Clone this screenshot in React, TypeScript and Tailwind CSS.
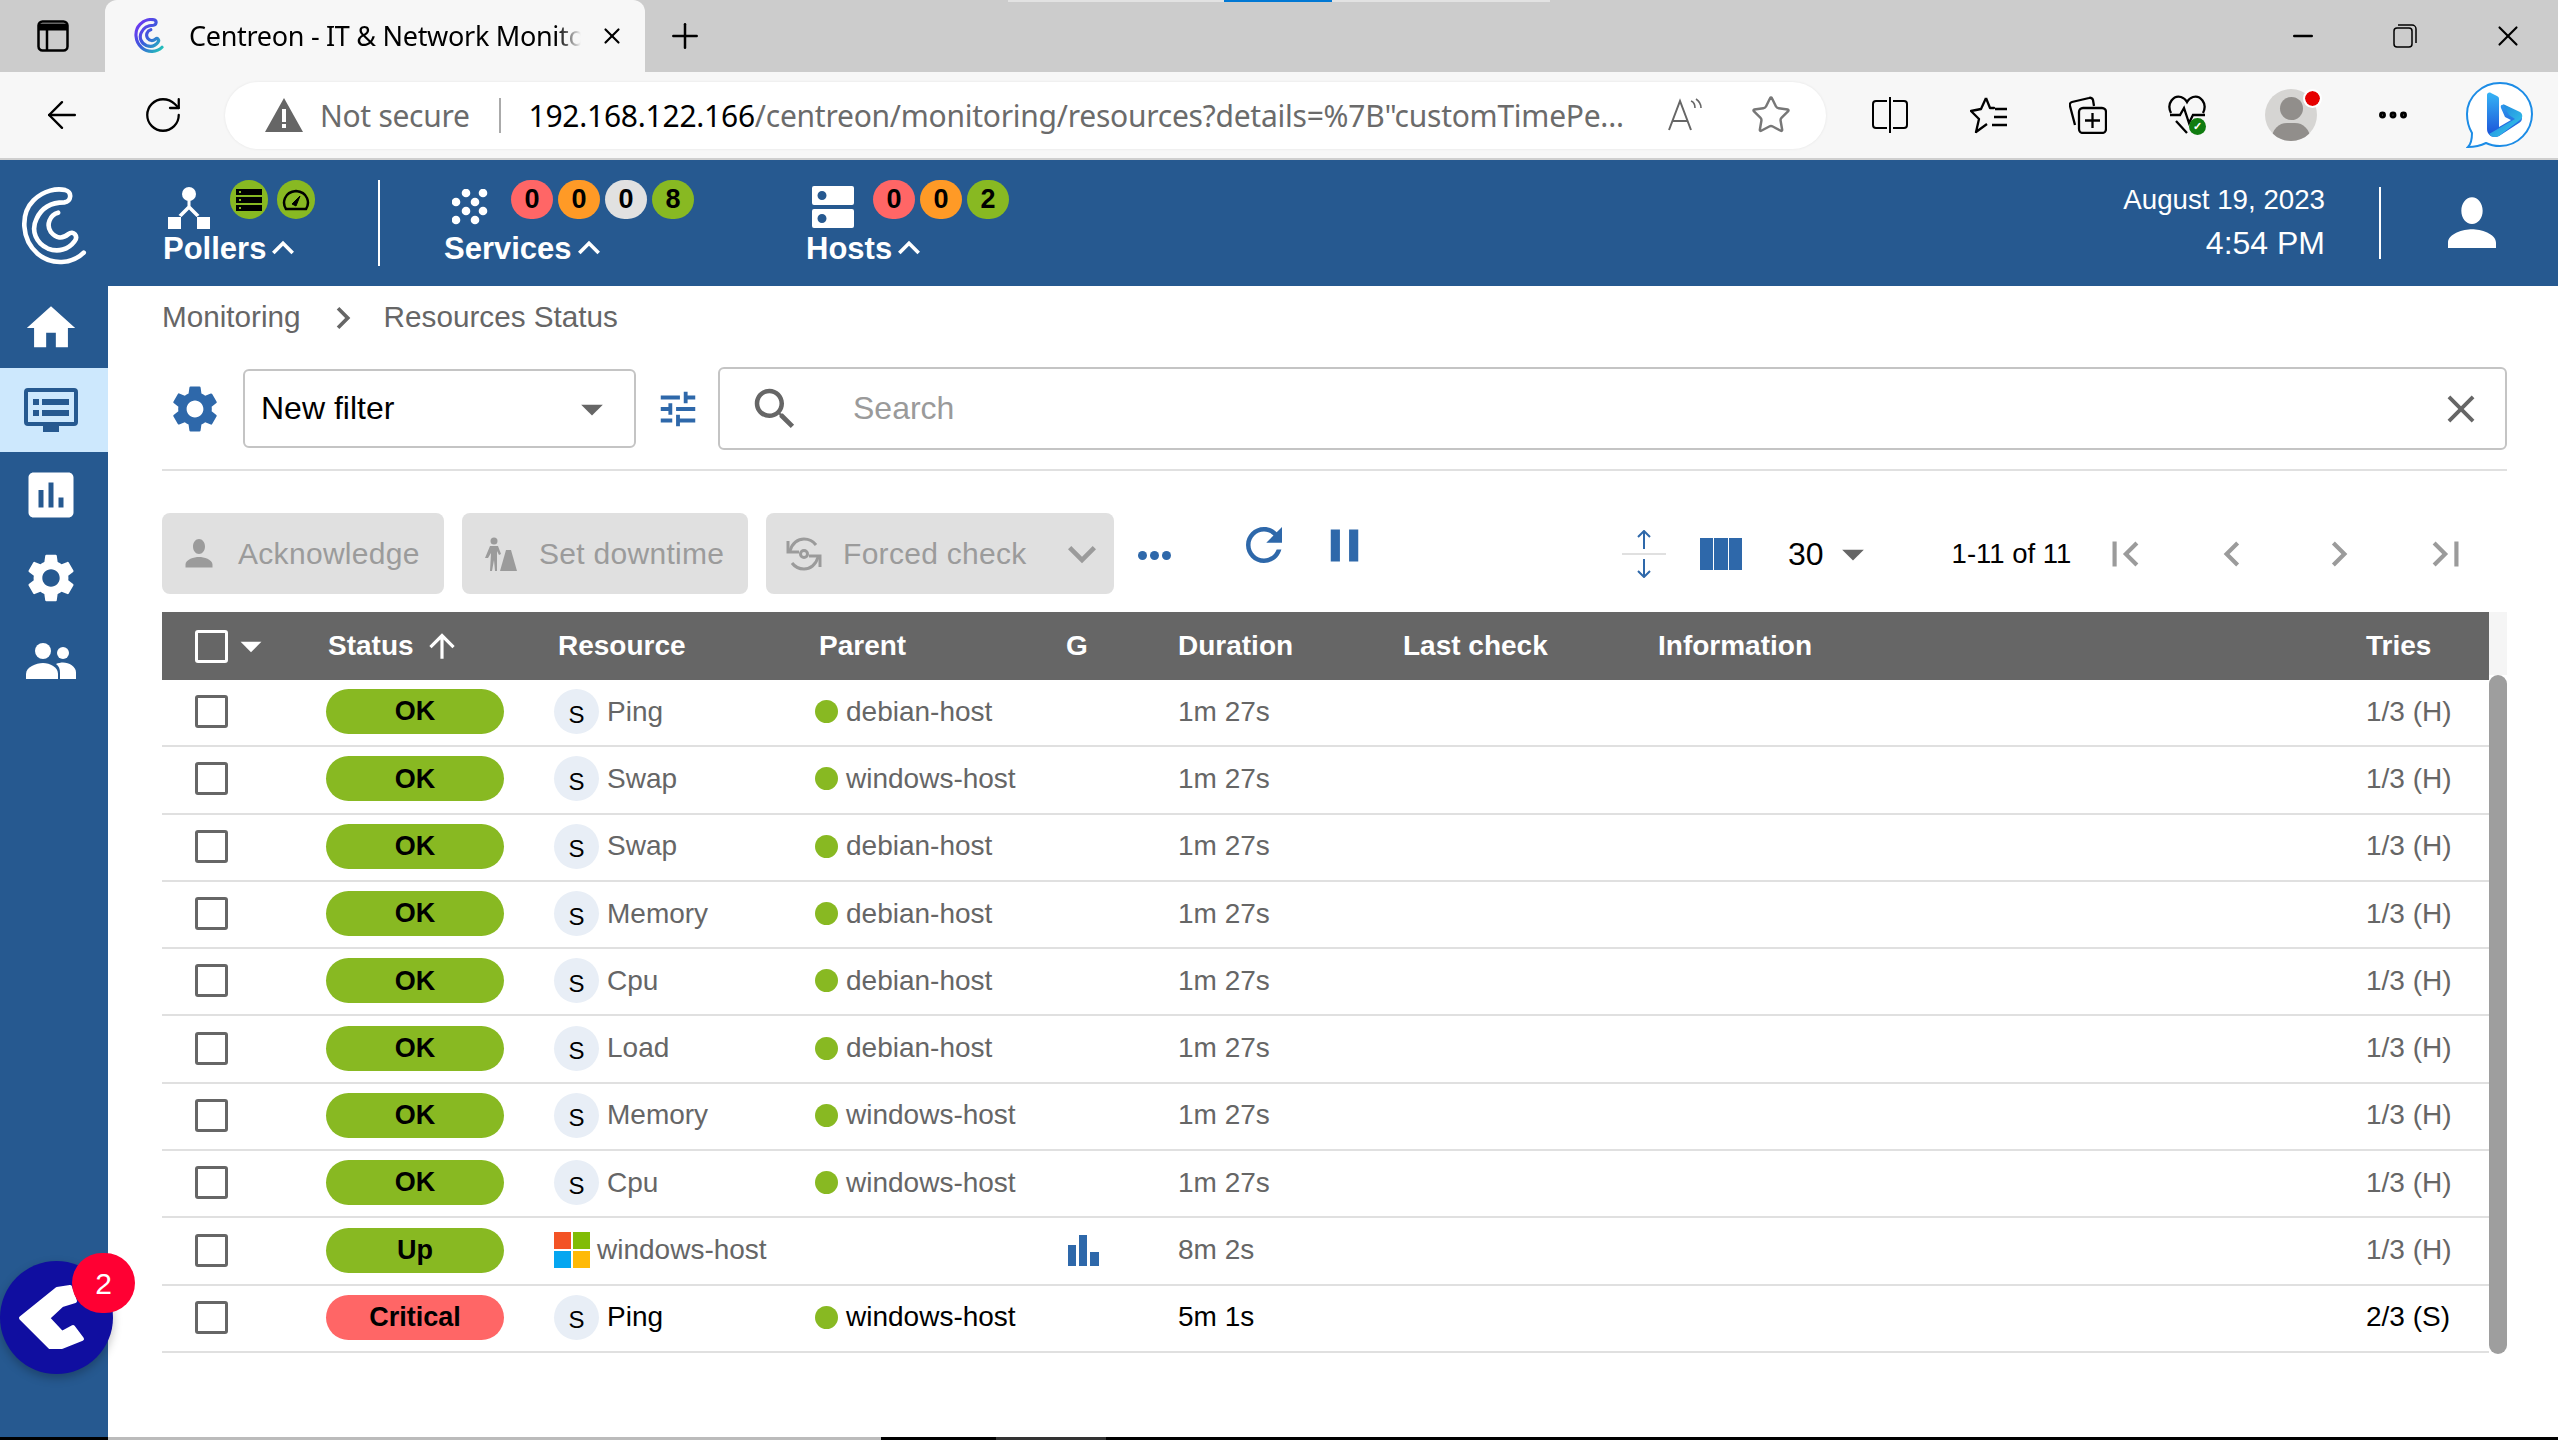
import React from "react";
import { ArrowLeft, RotateCw, Star, Plus, X, Minus, MoreHorizontal } from "lucide-react";

const P = {
  home: "M10 20v-6h4v6h5v-8h3L12 3 2 12h3v8z",
  gear: "M19.14,12.94c0.04-0.3,0.06-0.61,0.06-0.94c0-0.32-0.02-0.64-0.07-0.94l2.03-1.58c0.18-0.14,0.23-0.41,0.12-0.61 l-1.92-3.32c-0.12-0.22-0.37-0.29-0.59-0.22l-2.39,0.96c-0.5-0.38-1.03-0.7-1.62-0.94L14.4,2.81c-0.04-0.24-0.24-0.41-0.48-0.41 h-3.84c-0.24,0-0.43,0.17-0.47,0.41L9.25,5.35C8.66,5.59,8.12,5.92,7.63,6.29L5.24,5.33c-0.22-0.08-0.47,0-0.59,0.22L2.74,8.87 C2.62,9.08,2.66,9.34,2.86,9.48l2.03,1.58C4.84,11.36,4.8,11.69,4.8,12s0.02,0.64,0.07,0.94l-2.03,1.58 c-0.18,0.14-0.23,0.41-0.12,0.61l1.92,3.32c0.12,0.22,0.37,0.29,0.59,0.22l2.39-0.96c0.5,0.38,1.03,0.7,1.62,0.94l0.36,2.54 c0.05,0.24,0.24,0.41,0.48,0.41h3.84c0.24,0,0.44-0.17,0.47-0.41l0.36-2.54c0.59-0.24,1.13-0.56,1.62-0.94l2.39,0.96 c0.22,0.08,0.47,0,0.59-0.22l1.92-3.32c0.12-0.22,0.07-0.47-0.12-0.61L19.14,12.94z M12,15.6c-1.98,0-3.6-1.62-3.6-3.6 s1.62-3.6,3.6-3.6s3.6,1.62,3.6,3.6S13.98,15.6,12,15.6z",
  search: "M15.5 14h-.79l-.28-.27C15.41 12.59 16 11.11 16 9.5 16 5.91 13.09 3 9.5 3S3 5.91 3 9.5 5.91 16 9.5 16c1.61 0 3.09-.59 4.23-1.57l.27.28v.79l5 4.99L20.49 19l-4.99-5zm-6 0C7.01 14 5 11.99 5 9.5S7.01 5 9.5 5 14 7.01 14 9.5 11.99 14 9.5 14z",
  tune: "M3 17v2h6v-2H3zM3 5v2h10V5H3zm10 16v-2h8v-2h-8v-2h-2v6h2zM7 9v2H3v2h4v2h2V9H7zm14 4v-2H11v2h10zm-6-4h2V7h4V5h-4V3h-2v6z",
  refresh: "M17.65 6.35C16.2 4.9 14.21 4 12 4c-4.42 0-7.99 3.58-7.99 8s3.57 8 7.99 8c3.73 0 6.84-2.55 7.73-6h-2.08c-.82 2.33-3.04 4-5.65 4-3.31 0-6-2.69-6-6s2.69-6 6-6c1.66 0 3.14.69 4.22 1.78L13 11h7V4l-2.35 2.35z",
  pause: "M6 19h4V5H6v14zm8-14v14h4V5h-4z",
  poll: "M19 3H5c-1.1 0-2 .9-2 2v14c0 1.1.9 2 2 2h14c1.1 0 2-.9 2-2V5c0-1.1-.9-2-2-2zM9 17H7v-7h2v7zm4 0h-2V7h2v10zm4 0h-2v-4h2v4z",
  up: "M4 12l1.41 1.41L11 7.83V20h2V7.83l5.58 5.59L20 12l-8-8-8 8z",
  first: "M18.41 16.59L13.82 12l4.59-4.59L17 6l-6 6 6 6zM6 6h2v12H6z",
  last: "M5.59 7.41L10.18 12l-4.59 4.59L7 18l6-6-6-6zM16 6h2v12h-2z",
  prev: "M15.41 7.41L14 6l-6 6 6 6 1.41-1.41L10.83 12z",
  next: "M10 6L8.59 7.41 13.17 12l-4.58 4.59L10 18l6-6z",
  drop: "M7 10l5 5 5-5z",
  close: "M19 6.41L17.59 5 12 10.59 6.41 5 5 6.41 10.59 12 5 17.59 6.41 19 12 13.41 17.59 19 19 17.59 13.41 12z",
  less: "M12 8l-6 6 1.41 1.41L12 10.83l4.59 4.58L18 14z",
  more: "M16.59 8.59L12 13.17 7.41 8.59 6 10l6 6 6-6z",
  person: "M12 12c2.21 0 4-2.24 4-5s-1.79-5-4-5-4 2.24-4 5 1.79 5 4 5zm0 2c-3.2 0-9 1.6-9 5v2h18v-2c0-3.4-5.8-5-9-5z",
};

const Mi = ({ d, className }: { d: string; className: string }) => (
  <svg viewBox="0 0 24 24" className={className} fill="currentColor">
    <path d={d} />
  </svg>
);

const spiral =
  "M61 63 C50 74 30 76 16 64 C0 50 -1 25 12 12 C22 2 35 0 43 2 C50 4 49 13 42 14 C30 14 20 19 15 30 C9 42 15 54 26 59 C36 63 46 60 52 52 C56 47 51 41 46 45 C40 50 34 49 29 43 C24 36 28 26 36 24";

const Spiral = ({ className, stroke }: { className: string; stroke: string }) => (
  <svg viewBox="-2 -2 68 80" className={className} fill="none">
    <path d={spiral} stroke={stroke} strokeWidth="4.5" strokeLinecap="round" strokeLinejoin="round" />
  </svg>
);

const Favicon = () => (
  <svg viewBox="-2 -2 68 80" className="w-[36px] h-[36px]" fill="none">
    <defs>
      <linearGradient id="fav" x1="0" y1="0" x2="1" y2="1">
        <stop offset="0" stopColor="#7b2ff7" />
        <stop offset="0.5" stopColor="#3b5bdb" />
        <stop offset="1" stopColor="#20c9b7" />
      </linearGradient>
    </defs>
    <path d={spiral} stroke="url(#fav)" strokeWidth="7" strokeLinecap="round" />
  </svg>
);

const PollerIcon = () => (
  <svg viewBox="0 0 42 42" className="w-[42px] h-[42px]" fill="white">
    <circle cx="21" cy="7" r="7" />
    <path d="M19.5 12h3v7l9 9-3 2-7.5-7.5L13.5 30l-3-2 9-9z" />
    <rect x="0" y="30" width="13" height="12" />
    <rect x="29" y="30" width="13" height="12" />
  </svg>
);

const ServicesIcon = () => (
  <svg viewBox="0 0 36 36" className="w-[36px] h-[36px]" fill="white">
    {[[14, 4], [31, 4], [4, 13], [23, 13], [14, 22], [31, 22], [4, 31], [23, 31]].map(([x, y]) => (
      <circle key={`${x}-${y}`} cx={x} cy={y} r="4.3" />
    ))}
  </svg>
);

const HostsIcon = () => (
  <svg viewBox="0 0 42 42" className="w-[42px] h-[42px]">
    <path fillRule="evenodd" fill="white" d="M2 0h38a2 2 0 0 1 2 2v15a2 2 0 0 1-2 2H2a2 2 0 0 1-2-2V2a2 2 0 0 1 2-2zm8 5a4.5 4.5 0 1 0 0 9 4.5 4.5 0 0 0 0-9z" />
    <path fillRule="evenodd" fill="white" d="M2 23h38a2 2 0 0 1 2 2v15a2 2 0 0 1-2 2H2a2 2 0 0 1-2-2V25a2 2 0 0 1 2-2zm8 5a4.5 4.5 0 1 0 0 9 4.5 4.5 0 0 0 0-9z" />
  </svg>
);

const Badge = ({ color, children }: { color: string; children: React.ReactNode }) => (
  <div className={`w-[42px] h-[39px] rounded-full flex items-center justify-center text-[27px] font-bold text-black ${color}`}>
    {children}
  </div>
);

const NavLabel = ({ label }: { label: string }) => (
  <div className="flex items-center text-white font-bold text-[31px] leading-[36px]">
    {label}
    <Mi d={P.less} className="w-[44px] h-[44px] -ml-[5px] -my-[4px] -mt-[6px] shrink-0" />
  </div>
);

const Sidebar = () => (
  <div className="w-[108px] shrink-0 bg-[#265990] flex flex-col items-center text-white pt-[13px]">
    <Mi d={P.home} className="w-[58px] h-[58px] shrink-0 -translate-x-[3px]" />
    <div className="mt-[11px] w-full h-[84px] bg-[#cde8fd] flex items-center justify-center pr-[6px]">
      <svg viewBox="0 0 54 44" className="w-[54px] h-[44px]">
        <path fill="#265990" d="M4 0h46a4 4 0 0 1 4 4v30a4 4 0 0 1-4 4H35v6H19v-6H4a4 4 0 0 1-4-4V4a4 4 0 0 1 4-4z" />
        <rect x="4" y="4" width="46" height="30" fill="#cde8fd" />
        <rect x="9" y="11" width="6" height="6" fill="#265990" />
        <rect x="18" y="11" width="27" height="6" fill="#265990" />
        <rect x="9" y="22" width="6" height="6" fill="#265990" />
        <rect x="18" y="22" width="27" height="6" fill="#265990" />
      </svg>
    </div>
    <Mi d={P.poll} className="mt-[13px] w-[60px] h-[60px] shrink-0 -translate-x-[3px]" />
    <Mi d={P.gear} className="mt-[24px] w-[58px] h-[58px] shrink-0 -translate-x-[3px]" />
    <svg viewBox="0 0 50 36" className="mt-[36px] w-[50px] h-[36px] -translate-x-[3px]" fill="white">
      <ellipse cx="17" cy="8" rx="8" ry="8" />
      <circle cx="37" cy="10" r="6" />
      <path d="M0 36v-5c0-7 10-11 17-11s15 4 15 11v5z" />
      <path d="M34 36v-6c0-4-1-7-4-9 2-1 5-1.500 7-1.500 6 0 13 4 13 10v6.500z" />
    </svg>
  </div>
);

const TopBar = () => (
  <div className="h-[72px] bg-[#cccccc] flex items-center font-['Noto_Sans',sans-serif] text-black">
    <div className="w-[105px] flex justify-center">
      <svg viewBox="0 0 32 32" className="w-[32px] h-[32px]" fill="none" stroke="black" strokeWidth="2.500">
        <rect x="1.500" y="1.500" width="29" height="29" rx="4" />
        <path d="M1.500 7h29" strokeWidth="7" />
        <path d="M10 7v23" />
      </svg>
    </div>
    <div className="h-[72px] w-[540px] bg-[#f7f7f7] rounded-t-[12px] flex items-center pl-[26px] overflow-hidden">
      <Favicon />
      <div className="ml-[22px] w-[392px] text-[27px] whitespace-nowrap overflow-hidden tracking-[-0.3px] [mask-image:linear-gradient(to_right,black_94%,transparent)]">
        Centreon - IT &amp; Network Monitor
      </div>
      <X className="ml-[18px] w-[26px] h-[26px]" strokeWidth={2} />
    </div>
    <Plus className="ml-[20px] w-[40px] h-[40px]" strokeWidth={1.5} />
    <div className="flex-1" />
    <Minus className="w-[30px] h-[30px] mr-[75px]" strokeWidth={2} />
    <svg viewBox="0 0 24 24" className="w-[24px] h-[24px] mr-[74px]" fill="none" stroke="black" strokeWidth="1.500">
      <rect x="1" y="4" width="18" height="19" rx="3" />
      <path d="M5 1h14a4 4 0 0 1 4 4v14" />
    </svg>
    <X className="w-[34px] h-[34px] mr-[33px]" strokeWidth={1.5} />
  </div>
);

const AddressBar = () => (
  <div className="h-[88px] bg-[#f7f7f7] border-b-2 border-[#cfcfcf] flex items-center font-['Noto_Sans',sans-serif]">
    <ArrowLeft className="ml-[40px] w-[44px] h-[44px] text-black" strokeWidth={1.3} />
    <RotateCw className="ml-[58px] w-[42px] h-[42px] text-black" strokeWidth={1.3} />
    <div className="ml-[41px] w-[1601px] h-[67px] bg-white rounded-full flex items-center shadow-[0_0_3px_rgba(0,0,0,0.08)]">
      <svg viewBox="0 0 38 34" className="ml-[40px] w-[38px] h-[34px]" fill="#666">
        <path fillRule="evenodd" d="M19 0l19 34H0zM17 11h4v13h-4zM17 26h4v4h-4z" />
      </svg>
      <span className="ml-[17px] text-[30px] tracking-[-0.3px] text-[#6b6b6b]">Not secure</span>
      <div className="ml-[29px] w-[2px] h-[35px] bg-[#aaa]" />
      <span className="ml-[28px] text-[30px] tracking-[-0.25px] text-[#6b6b6b] whitespace-nowrap">
        <span className="text-black">192.168.122.166</span>/centreon/monitoring/resources?details=%7B"customTimePe...
      </span>
      <div className="flex-1" />
      <svg viewBox="0 0 36 34" className="w-[36px] h-[34px] mr-[47px]" fill="none" stroke="#666" strokeWidth="2">
        <path d="M2 32L13 3l11 29M6 23h14" />
        <path d="M24 3c3 1 4 4 4 7M29 1c3 2 5 6 5 9" strokeWidth="1.600" />
      </svg>
      <Star className="w-[42px] h-[42px] mr-[34px] text-[#777]" strokeWidth={1.4} />
    </div>
    <svg viewBox="0 0 36 36" className="ml-[46px] w-[36px] h-[36px]" fill="none" stroke="black" strokeWidth="2">
      <path d="M15 4H4a3 3 0 0 0-3 3v21a3 3 0 0 0 3 3h11M21 4h11a3 3 0 0 1 3 3v21a3 3 0 0 1-3 3H21M18 0v36" />
    </svg>
    <svg viewBox="0 0 38 38" className="ml-[62px] w-[38px] h-[38px]" fill="none" stroke="black" strokeWidth="2.300" strokeLinejoin="round">
      <path d="M16 2l4 10h4l-1 0M16 2l-5 11-10 2 8 8-3 13 11-8" />
      <path d="M25 13h12M24 21h13M22 29h15" />
    </svg>
    <svg viewBox="0 0 38 38" className="ml-[61px] w-[38px] h-[38px]" fill="none" stroke="black" strokeWidth="2.300">
      <path d="M6 29L1 10a3 3 0 0 1 2-4l17-4a3 3 0 0 1 4 2l1 6" />
      <rect x="10" y="12" width="27" height="25" rx="4" />
      <path d="M23.500 17v15M16 24.500h15" />
    </svg>
    <div className="relative ml-[61px] w-[38px] h-[40px]">
      <svg viewBox="0 0 38 40" className="w-[38px] h-[40px]" fill="none" stroke="black" strokeWidth="2.300">
        <path d="M3 18C-2 8 6 0 13 2c3 1 5 3 6 5 1-2 3-4 6-5 7-2 15 6 10 16M2 20h10l4-7 5 15 4-8h12M8 26l11 12" />
      </svg>
      <div className="absolute right-0 bottom-0 w-[17px] h-[17px] rounded-full bg-[#107c10] flex items-center justify-center text-white text-[11px] font-bold">✓</div>
    </div>
    <div className="relative ml-[59px] w-[52px] h-[52px] rounded-full bg-[#d6d5d3] overflow-hidden">
      <div className="mx-auto mt-[8px] w-[23px] h-[23px] rounded-full bg-[#918e8b]" />
      <div className="mx-auto mt-[3px] w-[38px] h-[30px] rounded-full bg-[#918e8b]" />
    </div>
    <div className="relative -ml-[12px] -mt-[34px] w-[15px] h-[15px] rounded-full bg-[#e60000] outline-2 outline-white" />
    <MoreHorizontal className="ml-[55px] w-[36px] h-[36px] text-black" strokeWidth={2.600} />
    <svg viewBox="0 0 68 68" className="ml-[55px] w-[68px] h-[68px]" fill="none">
      <defs>
        <linearGradient id="bb" x1="0" y1="0" x2="0" y2="1">
          <stop offset="0" stopColor="#36b4f5" />
          <stop offset="1" stopColor="#1b4fd8" />
        </linearGradient>
        <linearGradient id="bc" x1="0" y1="0" x2="1" y2="1">
          <stop offset="0" stopColor="#1b78e0" />
          <stop offset="1" stopColor="#38d0e8" />
        </linearGradient>
      </defs>
      <path d="M34 2c18 0 32 14 32 31S52 65 34 65c-5 0-10-1-14-3-4 2-10 4-18 4 3-3 4-8 4-14C3 47 1 40 1 33 1 16 16 2 34 2z" fill="white" stroke="#1c8ce6" strokeWidth="2" />
      <path d="M21 14c0-2 2-3 4-2l6 3c1 .5 2 1 2 3v28l12-7-6-3-4-9c-1-3 1-4 3-3l14 7c3 1 4 3 4 6 0 2-1 4-3 5L33 55c-6 3-12-1-12-7z" fill="url(#bb)" />
      <path d="M37 23l17 8c3 2 3 6 0 8L33 55c-4 2-8 1-10-2l26-15-6-4z" fill="url(#bc)" />
    </svg>
  </div>
);

const Header = () => (
  <div className="h-[126px] bg-[#265990] flex font-['Liberation_Sans',sans-serif] text-white">
    <div className="w-[108px] flex items-center justify-center pt-[8px]">
      <Spiral className="w-[70px] h-[82px]" stroke="white" />
    </div>
    <div className="ml-[55px] w-[215px] pt-[20px]">
      <div className="h-[51px] flex">
        <div className="ml-[5px] mt-[7px]"><PollerIcon /></div>
        <div className="ml-[20px] w-[38px] h-[39px] rounded-full bg-[#88b922] flex items-center justify-center">
          <svg viewBox="0 0 26 22" className="w-[26px] h-[22px]" fill="black">
            <path fillRule="evenodd" d="M0 0h26v6H0zM3 2v2h2V2zM0 8h26v6H0zM3 10v2h2v-2zM0 16h26v6H0zM3 18v2h2v-2z" />
          </svg>
        </div>
        <div className="ml-[9px] w-[38px] h-[39px] rounded-full bg-[#88b922] flex items-center justify-center">
          <svg viewBox="0 0 28 22" className="w-[28px] h-[22px]" fill="none" stroke="black" strokeWidth="2.500">
            <path d="M4 20C0 14 2 3 14 2c12 1 14 12 10 18z" />
            <path d="M10 15l8-8-4 10z" fill="black" strokeWidth="1" />
          </svg>
        </div>
      </div>
      <NavLabel label="Pollers" />
    </div>
    <div className="mt-[20px] w-[2px] h-[86px] bg-white" />
    <div className="ml-[64px] w-[362px] pt-[20px]">
      <div className="h-[51px] flex">
        <div className="ml-[8px] mt-[9px]"><ServicesIcon /></div>
        <div className="ml-[23px] flex gap-[5px]">
          <Badge color="bg-[#ff6666]">0</Badge>
          <Badge color="bg-[#ff9a26]">0</Badge>
          <Badge color="bg-[#e1e1e1]">0</Badge>
          <Badge color="bg-[#88b922]">8</Badge>
        </div>
      </div>
      <NavLabel label="Services" />
    </div>
    <div className="pt-[20px]">
      <div className="h-[51px] flex">
        <div className="ml-[6px] mt-[6px]"><HostsIcon /></div>
        <div className="ml-[19px] flex gap-[5px]">
          <Badge color="bg-[#ff6666]">0</Badge>
          <Badge color="bg-[#ff9a26]">0</Badge>
          <Badge color="bg-[#88b922]">2</Badge>
        </div>
      </div>
      <NavLabel label="Hosts" />
    </div>
    <div className="flex-1" />
    <div className="text-right pt-[24px]">
      <div className="text-[27.7px] leading-[32px]">August 19, 2023</div>
      <div className="text-[32px] leading-[38px] mt-[8px]">4:54 PM</div>
    </div>
    <div className="ml-[54px] mt-[27px] w-[2px] h-[72px] bg-white" />
    <div className="ml-[58px] mt-[32px] w-[66px] mr-[53px] flex justify-center">
      <Mi d={P.person} className="w-[64px] h-[64px] shrink-0" />
    </div>
  </div>
);

const FilterRow = () => (
  <div className="h-[83px] flex items-center">
    <Mi d={P.gear} className="ml-[5px] w-[56px] h-[56px] text-[#2e68aa] shrink-0" />
    <div className="ml-[20px] w-[393px] h-[79px] border-2 border-[#c4c4c4] rounded-[6px] flex items-center pl-[16px] pr-[16px] text-[32px] text-black">
      <span className="pb-[2px]">New filter</span>
      <div className="flex-1" />
      <Mi d={P.drop} className="w-[52px] h-[52px] text-[#666]" />
    </div>
    <Mi d={P.tune} className="ml-[19px] w-[46px] h-[46px] text-[#2e68aa] shrink-0" />
    <div className="ml-[17px] flex-1 h-[83px] border-2 border-[#c4c4c4] rounded-[6px] flex items-center pl-[28px] pr-[21px]">
      <Mi d={P.search} className="w-[54px] h-[54px] text-[#666]" />
      <span className="ml-[51px] text-[32px] text-[#9a9a9a] pb-[2px]">Search</span>
      <div className="flex-1" />
      <Mi d={P.close} className="w-[46px] h-[46px] text-[#666]" />
    </div>
  </div>
);

const ActionButton = ({ width, icon, label, children }: { width: string; icon: React.ReactNode; label: string; children?: React.ReactNode }) => (
  <div className={`h-[81px] rounded-[8px] bg-[#e0e0e0] flex items-center text-[#9b9b9b] text-[30px] tracking-[0.3px] ${width}`}>
    {icon}
    {label}
    {children}
  </div>
);

const ActionRow = () => (
  <div className="h-[81px] mt-[42px] flex items-center">
    <div className="flex gap-[18px]">
      <ActionButton
        width="w-[282px]"
        label="Acknowledge"
        icon={<Mi d={P.person} className="ml-[19px] mr-[21px] w-[36px] h-[36px]" />}
      />
      <ActionButton
        width="w-[286px]"
        label="Set downtime"
        icon={
          <svg viewBox="0 0 34 34" className="ml-[21px] mr-[22px] w-[34px] h-[34px]" fill="#9b9b9b">
            <circle cx="11" cy="4" r="3.500" />
            <path d="M7 9h8l3 8-2 1-2-4v20h-2l-1-11-2 11H7l1-18-3 5H2z" />
            <path d="M23 13h5l6 21H17z" />
          </svg>
        }
      />
      <ActionButton
        width="w-[348px]"
        label="Forced check"
        icon={
          <svg viewBox="0 0 36 36" className="ml-[20px] mr-[21px] w-[36px] h-[36px]" fill="none" stroke="#9b9b9b" strokeWidth="3">
            <path d="M4 15C6 7 12 3 18 3c5 0 9 2 12 6M32 21c-2 8-8 12-14 12-5 0-9-2-12-6" />
            <path d="M2 5v11h11M34 31V20H23" strokeWidth="3" />
            <circle cx="18" cy="18" r="3.500" />
          </svg>
        }
      >
        <Mi d={P.more} className="ml-[27px] w-[56px] h-[56px] shrink-0" />
      </ActionButton>
    </div>
    <div className="ml-[24px] flex gap-[3px] mt-[4px]">
      <div className="w-[9px] h-[9px] rounded-full bg-[#2e68aa]" />
      <div className="w-[9px] h-[9px] rounded-full bg-[#2e68aa]" />
      <div className="w-[9px] h-[9px] rounded-full bg-[#2e68aa]" />
    </div>
    <Mi d={P.refresh} className="ml-[66px] -mt-[17px] w-[54px] h-[54px] text-[#2e68aa]" />
    <Mi d={P.pause} className="ml-[26px] -mt-[17px] w-[55px] h-[55px] text-[#2e68aa]" />
    <div className="ml-[249px] w-[46px] flex flex-col items-center text-[#2e68aa]">
      <svg viewBox="0 0 46 48" className="w-[46px] h-[48px]" fill="none" stroke="currentColor" strokeWidth="2">
        <path d="M23 1v18M17 7l6-6 6 6M23 47V29M17 41l6 6 6-6" />
        <path d="M1 24h44" stroke="#e0e0e0" strokeWidth="2" />
      </svg>
    </div>
    <div className="ml-[33px] w-[42px] h-[32px] flex gap-[1px]">
      <div className="flex-1 bg-[#2e68aa]" />
      <div className="flex-1 bg-[#2e68aa]" />
      <div className="flex-1 bg-[#2e68aa]" />
    </div>
    <span className="ml-[46px] text-[32px] text-black">30</span>
    <Mi d={P.drop} className="ml-[3px] w-[52px] h-[52px] text-[#666]" />
    <span className="ml-[73px] text-[27.5px] text-black whitespace-nowrap">1-11 of 11</span>
    <Mi d={P.first} className="ml-[29px] w-[50px] h-[50px] text-[#9b9b9b]" />
    <Mi d={P.prev} className="ml-[57px] w-[50px] h-[50px] text-[#9b9b9b]" />
    <Mi d={P.next} className="ml-[57px] w-[50px] h-[50px] text-[#9b9b9b]" />
    <Mi d={P.last} className="ml-[57px] w-[50px] h-[50px] text-[#9b9b9b]" />
  </div>
);

const cols = "grid grid-cols-[160px_236px_261px_240px_119px_225px_255px_708px_1fr]";

type Row = { status: string; kind: "s" | "h"; name: string; parent?: string; duration: string; tries: string };

const rows: Row[] = [
  { status: "OK", kind: "s", name: "Ping", parent: "debian-host", duration: "1m 27s", tries: "1/3 (H)" },
  { status: "OK", kind: "s", name: "Swap", parent: "windows-host", duration: "1m 27s", tries: "1/3 (H)" },
  { status: "OK", kind: "s", name: "Swap", parent: "debian-host", duration: "1m 27s", tries: "1/3 (H)" },
  { status: "OK", kind: "s", name: "Memory", parent: "debian-host", duration: "1m 27s", tries: "1/3 (H)" },
  { status: "OK", kind: "s", name: "Cpu", parent: "debian-host", duration: "1m 27s", tries: "1/3 (H)" },
  { status: "OK", kind: "s", name: "Load", parent: "debian-host", duration: "1m 27s", tries: "1/3 (H)" },
  { status: "OK", kind: "s", name: "Memory", parent: "windows-host", duration: "1m 27s", tries: "1/3 (H)" },
  { status: "OK", kind: "s", name: "Cpu", parent: "windows-host", duration: "1m 27s", tries: "1/3 (H)" },
  { status: "Up", kind: "h", name: "windows-host", duration: "8m 2s", tries: "1/3 (H)" },
  { status: "Critical", kind: "s", name: "Ping", parent: "windows-host", duration: "5m 1s", tries: "2/3 (S)" },
];

const TableRow = ({ row }: { row: Row }) => {
  const critical = row.status === "Critical";
  const text = critical ? "text-black" : "text-[#666666]";
  return (
    <div className={`${cols} h-[67.3px] border-b-2 border-[#e0e0e0] pb-[2px] items-center text-[28px] ${text}`}>
      <div className="pl-[33px]">
        <div className="w-[33px] h-[33px] border-[3px] border-[#666] rounded-[3px]" />
      </div>
      <div className={`w-[178px] ml-[4px] h-[45px] rounded-full flex items-center justify-center font-bold text-[27px] text-black ${critical ? "bg-[#ff6666]" : "bg-[#88b922]"}`}>
        {row.status}
      </div>
      <div className="flex items-center">
        {row.kind === "s" ? (
          <>
            <div className="w-[45px] h-[45px] -ml-[4px] rounded-full bg-[#e8eef6] flex items-center justify-center text-black text-[24px] pt-[6px]">S</div>
            <span className="ml-[8px]">{row.name}</span>
          </>
        ) : (
          <>
            <div className="-ml-[4px] grid grid-cols-2 gap-[2px] w-[36px] h-[36px] shrink-0">
              <div className="bg-[#f35325]" />
              <div className="bg-[#81bc06]" />
              <div className="bg-[#05a6f0]" />
              <div className="bg-[#ffba08]" />
            </div>
            <span className="ml-[7px]">{row.name}</span>
          </>
        )}
      </div>
      <div className="flex items-center -ml-[4px]">
        {row.parent && (
          <>
            <div className="w-[23px] h-[23px] rounded-full bg-[#88b922]" />
            <span className="ml-[8px]">{row.parent}</span>
          </>
        )}
      </div>
      <div>
        {row.kind === "h" && (
          <div className="ml-[9px] w-[31px] h-[31px] flex items-end gap-[3px]">
            <div className="w-[8px] h-[21px] bg-[#2e68aa]" />
            <div className="w-[8px] h-[31px] bg-[#2e68aa]" />
            <div className="w-[9px] h-[14px] bg-[#2e68aa]" />
          </div>
        )}
      </div>
      <div>{row.duration}</div>
      <div />
      <div />
      <div>{row.tries}</div>
    </div>
  );
};

const Table = () => (
  <div className="mt-[18px] flex">
    <div className="w-[2327px]">
      <div className={`${cols} h-[68px] bg-[#666666] items-center text-white font-bold text-[28px]`}>
        <div className="pl-[33px] flex items-center">
          <div className="w-[33px] h-[33px] border-[3px] border-white rounded-[3px]" />
          <Mi d={P.drop} className="-ml-[2px] w-[50px] h-[50px] shrink-0" />
        </div>
        <div className="pl-[6px] flex items-center">
          Status
          <Mi d={P.up} className="ml-[9px] w-[38px] h-[38px]" />
        </div>
        <div>Resource</div>
        <div>Parent</div>
        <div className="pl-[7px]">G</div>
        <div>Duration</div>
        <div>Last check</div>
        <div>Information</div>
        <div>Tries</div>
      </div>
      {rows.map((row, i) => (
        <TableRow key={i} row={row} />
      ))}
    </div>
    <div className="w-[18px]">
      <div className="h-[63px] bg-[#f5f5f5]" />
      <div className="h-[679px] rounded-full bg-[#9e9e9e]" />
    </div>
  </div>
);

export default function App() {
  return (
    <div className="relative w-[2558px] h-[1440px] overflow-hidden bg-white">
      <div className="absolute left-[1008px] top-0 w-[542px] h-[2px] bg-[#e2e2e2]" />
      <div className="absolute left-[1224px] top-0 w-[108px] h-[2px] bg-[#0078d4]" />
      <TopBar />
      <AddressBar />
      <Header />
      <div className="flex h-[1154px] font-['Liberation_Sans',sans-serif]">
        <Sidebar />
        <div className="flex-1 pl-[54px] pr-[51px]">
          <div className="h-[81px] flex items-center text-[29.7px] text-[#666666] pb-[18px]">
            <span>Monitoring</span>
            <Mi d={P.next} className="ml-[20px] w-[44px] h-[44px]" />
            <span className="ml-[19px]">Resources Status</span>
          </div>
          <FilterRow />
          <div className="mt-[19px] h-[2px] bg-[#e0e0e0]" />
          <ActionRow />
          <Table />
        </div>
      </div>
      <div className="absolute left-0 top-[1261px] w-[113px] h-[113px] rounded-full bg-[#100ea0] shadow-[0_4px_10px_rgba(0,0,0,0.25)]">
        <svg viewBox="0 0 113 113" className="w-[113px] h-[113px]" fill="white" stroke="white" strokeWidth="4" strokeLinejoin="round">
          <path d="M57 28L21 57l29 29h12l20-8-9-12-11 6-14-15 14-13 13-4-5-14z" />
        </svg>
      </div>
      <div className="absolute left-[72px] top-[1253px] w-[63px] h-[60px] rounded-full bg-[#ff0033] flex items-center justify-center text-white text-[30px] font-['Liberation_Sans',sans-serif]">
        2
      </div>
      <div className="absolute left-0 bottom-0 w-full h-[3px] flex">
        <div className="w-[108px] bg-black" />
        <div className="w-[773px] bg-[#bbbbbb]" />
        <div className="w-[115px] bg-black" />
        <div className="w-[110px] bg-[#333333]" />
        <div className="flex-1 bg-black" />
      </div>
    </div>
  );
}
